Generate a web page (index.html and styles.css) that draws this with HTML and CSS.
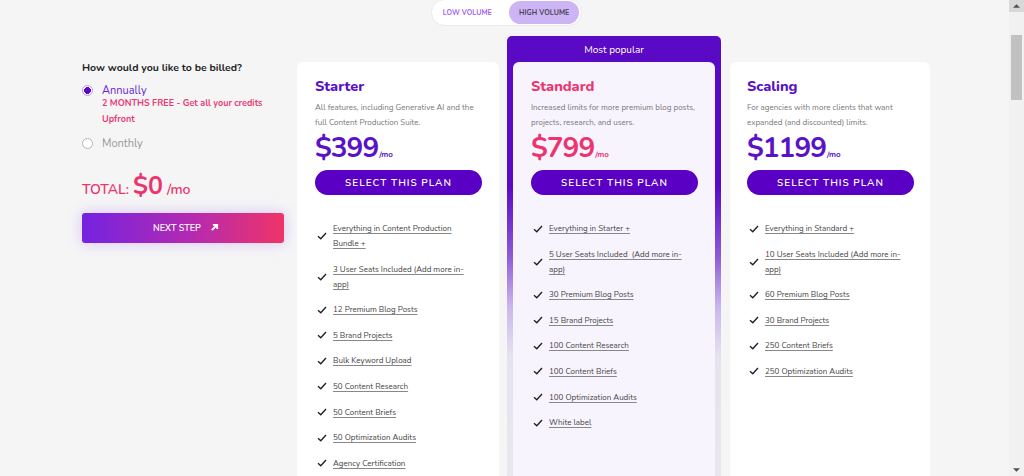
FILE: index.html
```html
<!DOCTYPE html>
<html lang="en">
<head>
<meta charset="utf-8">
<title>Pricing</title>
<link rel="stylesheet" href="styles.css">
</head>
<body>
<div class="page">
  <div class="toggle-row">
    <div class="toggle">
      <span class="tog-opt">LOW VOLUME</span>
      <span class="tog-opt active">HIGH VOLUME</span>
    </div>
  </div>
  <div class="pricing">
    <div class="billing">
      <div class="bill-q">How would you like to be billed?</div>
      <div class="radio-row">
        <span class="radio on"></span>
        <div>
          <div class="radio-label on">Annually</div>
          <div class="promo">2 MONTHS FREE - Get all your credits<br>Upfront</div>
        </div>
      </div>
      <div class="radio-row">
        <span class="radio"></span>
        <div class="radio-label">Monthly</div>
      </div>
      <div class="total"><span class="t-label">TOTAL:</span> <span class="t-amt">$0</span> <span class="t-mo">/mo</span></div>
      <button class="next">NEXT STEP
        <svg class="arrow" viewBox="0 0 10 10" width="9" height="9"><path d="M2 8 L7.5 2.5 M3.2 2 H8 V6.8" fill="none" stroke="#fff" stroke-width="2"/></svg>
      </button>
    </div>

    <div class="card">
      <div class="plan-name">Starter</div>
      <div class="plan-desc">All features, including Generative AI and the full Content Production Suite.</div>
      <div class="price"><span class="amt">$399</span><span class="mo">/mo</span></div>
      <button class="select">SELECT THIS PLAN</button>
      <ul class="features">
        <li><svg class="chk" viewBox="0 0 10 8"><path d="M1 4.2 L3.8 6.8 L9 1" fill="none" stroke="#222" stroke-width="1.4"/></svg><span>Everything in Content Production Bundle +</span></li>
        <li><svg class="chk" viewBox="0 0 10 8"><path d="M1 4.2 L3.8 6.8 L9 1" fill="none" stroke="#222" stroke-width="1.4"/></svg><span>3 User Seats Included (Add more in-app)</span></li>
        <li><svg class="chk" viewBox="0 0 10 8"><path d="M1 4.2 L3.8 6.8 L9 1" fill="none" stroke="#222" stroke-width="1.4"/></svg><span>12 Premium Blog Posts</span></li>
        <li><svg class="chk" viewBox="0 0 10 8"><path d="M1 4.2 L3.8 6.8 L9 1" fill="none" stroke="#222" stroke-width="1.4"/></svg><span>5 Brand Projects</span></li>
        <li><svg class="chk" viewBox="0 0 10 8"><path d="M1 4.2 L3.8 6.8 L9 1" fill="none" stroke="#222" stroke-width="1.4"/></svg><span>Bulk Keyword Upload</span></li>
        <li><svg class="chk" viewBox="0 0 10 8"><path d="M1 4.2 L3.8 6.8 L9 1" fill="none" stroke="#222" stroke-width="1.4"/></svg><span>50 Content Research</span></li>
        <li><svg class="chk" viewBox="0 0 10 8"><path d="M1 4.2 L3.8 6.8 L9 1" fill="none" stroke="#222" stroke-width="1.4"/></svg><span>50 Content Briefs</span></li>
        <li><svg class="chk" viewBox="0 0 10 8"><path d="M1 4.2 L3.8 6.8 L9 1" fill="none" stroke="#222" stroke-width="1.4"/></svg><span>50 Optimization Audits</span></li>
        <li><svg class="chk" viewBox="0 0 10 8"><path d="M1 4.2 L3.8 6.8 L9 1" fill="none" stroke="#222" stroke-width="1.4"/></svg><span>Agency Certification</span></li>
      </ul>
    </div>

    <div class="popular">
      <div class="pop-head">Most popular</div>
      <div class="card featured">
        <div class="plan-name pink">Standard</div>
        <div class="plan-desc">Increased limits for more premium blog posts, projects, research, and users.</div>
        <div class="price pink"><span class="amt">$799</span><span class="mo">/mo</span></div>
        <button class="select">SELECT THIS PLAN</button>
        <ul class="features">
          <li><svg class="chk" viewBox="0 0 10 8"><path d="M1 4.2 L3.8 6.8 L9 1" fill="none" stroke="#222" stroke-width="1.4"/></svg><span>Everything in Starter +</span></li>
          <li><svg class="chk" viewBox="0 0 10 8"><path d="M1 4.2 L3.8 6.8 L9 1" fill="none" stroke="#222" stroke-width="1.4"/></svg><span>5 User Seats Included&nbsp; (Add more in-app)</span></li>
          <li><svg class="chk" viewBox="0 0 10 8"><path d="M1 4.2 L3.8 6.8 L9 1" fill="none" stroke="#222" stroke-width="1.4"/></svg><span>30 Premium Blog Posts</span></li>
          <li><svg class="chk" viewBox="0 0 10 8"><path d="M1 4.2 L3.8 6.8 L9 1" fill="none" stroke="#222" stroke-width="1.4"/></svg><span>15 Brand Projects</span></li>
          <li><svg class="chk" viewBox="0 0 10 8"><path d="M1 4.2 L3.8 6.8 L9 1" fill="none" stroke="#222" stroke-width="1.4"/></svg><span>100 Content Research</span></li>
          <li><svg class="chk" viewBox="0 0 10 8"><path d="M1 4.2 L3.8 6.8 L9 1" fill="none" stroke="#222" stroke-width="1.4"/></svg><span>100 Content Briefs</span></li>
          <li><svg class="chk" viewBox="0 0 10 8"><path d="M1 4.2 L3.8 6.8 L9 1" fill="none" stroke="#222" stroke-width="1.4"/></svg><span>100 Optimization Audits</span></li>
          <li><svg class="chk" viewBox="0 0 10 8"><path d="M1 4.2 L3.8 6.8 L9 1" fill="none" stroke="#222" stroke-width="1.4"/></svg><span>White label</span></li>
        </ul>
      </div>
    </div>

    <div class="card scaling">
      <div class="plan-name">Scaling</div>
      <div class="plan-desc">For agencies with more clients that want expanded (and discounted) limits.</div>
      <div class="price"><span class="amt">$1199</span><span class="mo">/mo</span></div>
      <button class="select">SELECT THIS PLAN</button>
      <ul class="features">
        <li><svg class="chk" viewBox="0 0 10 8"><path d="M1 4.2 L3.8 6.8 L9 1" fill="none" stroke="#222" stroke-width="1.4"/></svg><span>Everything in Standard +</span></li>
        <li><svg class="chk" viewBox="0 0 10 8"><path d="M1 4.2 L3.8 6.8 L9 1" fill="none" stroke="#222" stroke-width="1.4"/></svg><span>10 User Seats Included (Add more in-app)</span></li>
        <li><svg class="chk" viewBox="0 0 10 8"><path d="M1 4.2 L3.8 6.8 L9 1" fill="none" stroke="#222" stroke-width="1.4"/></svg><span>60 Premium Blog Posts</span></li>
        <li><svg class="chk" viewBox="0 0 10 8"><path d="M1 4.2 L3.8 6.8 L9 1" fill="none" stroke="#222" stroke-width="1.4"/></svg><span>30 Brand Projects</span></li>
        <li><svg class="chk" viewBox="0 0 10 8"><path d="M1 4.2 L3.8 6.8 L9 1" fill="none" stroke="#222" stroke-width="1.4"/></svg><span>250 Content Briefs</span></li>
        <li><svg class="chk" viewBox="0 0 10 8"><path d="M1 4.2 L3.8 6.8 L9 1" fill="none" stroke="#222" stroke-width="1.4"/></svg><span>250 Optimization Audits</span></li>
      </ul>
    </div>
  </div>
</div>
<div class="scrollbar">
  <div class="sb-up"><svg viewBox="0 0 8 4" width="7" height="4"><path d="M0 4 L4 0 L8 4 Z" fill="#505050"/></svg></div>
  <div class="sb-track"><div class="sb-thumb"></div></div>
  <div class="sb-down"><svg viewBox="0 0 8 4" width="7" height="4"><path d="M0 0 L4 4 L8 0 Z" fill="#505050"/></svg></div>
</div>
</body>
</html>
```
FILE: styles.css
```css
* { box-sizing: border-box; }
html, body { margin: 0; padding: 0; }
body {
  width: 1024px;
  height: 476px;
  overflow: hidden;
  display: flex;
  background: #f5f5f6;
  font-family: "Nunito", "Lato", "Noto Sans", sans-serif;
  color: #333;
}
.page { flex: 1; min-width: 0; }

.toggle-row { display: flex; justify-content: center; padding-left: 4px; height: 36px; }
.toggle {
  display: flex;
  align-items: center;
  height: 27px;
  margin-top: -1px;
  padding: 0 2px 0 11px;
  background: #fff;
  border: 1px solid #ebe8f0;
  border-radius: 14px;
  gap: 17px;
}
.tog-opt {
  font-size: 7px;
  font-weight: 700;
  color: #a45ef0;
  letter-spacing: 0.1px;
}
.tog-opt.active {
  background: #cdb4f5;
  color: #4a4458;
  height: 23px;
  line-height: 23px;
  padding: 0 10px;
  border-radius: 12px;
}

.pricing {
  display: flex;
  align-items: flex-start;
  padding-left: 82px;
}

.billing { width: 202px; margin-top: 26px; margin-right: 13px; }
.bill-q { font-size: 10.5px; font-weight: 700; color: #222; line-height: 12px; }
.radio-row { display: flex; align-items: flex-start; gap: 9px; margin-top: 10px; }
.radio-row + .radio-row { margin-top: 9.5px; }
.radio {
  width: 11px; height: 11px; border-radius: 50%;
  border: 1px solid #b5b5b5; background: #fff; flex: none; margin-top: 1px;
}
.radio.on { border: 1.5px solid #b996f3; background: radial-gradient(circle, #5a0ac6 0 3.2px, #fff 3.6px); }
.radio-label { font-size: 11px; color: #999; line-height: 13px; }
.radio-label.on { color: #6a1fd6; }
.promo { font-size: 9px; font-weight: 700; color: #ec3a73; line-height: 16px; margin-top: -2px; }

.total { margin-top: 21px; color: #ec356f; display: flex; align-items: baseline; gap: 4px; line-height: 30px; }
.t-label { font-size: 14px; font-weight: 600; }
.t-amt { font-size: 25px; font-weight: 700; }
.t-mo { font-size: 14px; font-weight: 600; }

.next {
  margin-top: 8px;
  width: 202px; height: 30px;
  border: none; border-radius: 3px;
  background: linear-gradient(90deg, #7423e0 0%, #b52ab0 55%, #ef3467 100%);
  box-shadow: 0 0 14px rgba(160, 100, 240, 0.35);
  color: #fff; font-family: inherit; font-size: 9px; font-weight: 600;
  display: flex; align-items: center; justify-content: center; gap: 9px;
  padding: 0 0 0 6px;
}

.card {
  width: 202px;
  height: 480px;
  margin-top: 26px;
  background: #fff;
  border-radius: 6px;
  padding: 14px 17px 0 18px;
}
.card.scaling { width: 200px; padding-left: 17px; }
.popular {
  width: 214px;
  height: 460px;
  margin: 0 9px 0 8px;
  border-radius: 5px 5px 0 0;
  padding: 0 6px;
  background: linear-gradient(#5a09c5 0px, #5a09c5 150px, #8c5ad6 220px, #c9b6ec 270px, #e6e2ef 320px, #eae8ee 460px);
}
.pop-head { height: 26px; color: #fff; text-align: center; font-size: 10px; line-height: 28px; }
.card.featured { margin-top: 0; background: #f8f4fe; width: 202px; }

.plan-name { font-size: 14.5px; font-weight: 800; color: #5a12c6; line-height: 20px; }
.plan-name.pink, .price.pink { color: #ec356f; }
.plan-desc { font-size: 8px; color: #777; line-height: 15px; margin-top: 4px; }
.price { color: #5a12c6; display: flex; align-items: baseline; margin-top: 3px; }
.amt { font-size: 28px; font-weight: 700; line-height: 30px; letter-spacing: -1px; }
.mo { font-size: 8px; font-weight: 700; margin-left: 1px; }
.select {
  display: block;
  width: 167px; height: 25px; margin-top: 7px;
  border: none; border-radius: 13px;
  background: #5a00c4; color: #fff;
  font-family: inherit; font-size: 10px; font-weight: 600; letter-spacing: 1px;
}
.features { list-style: none; margin: 26px 0 0 0; padding: 0; }
.features li {
  display: flex; align-items: center;
  font-size: 8px; line-height: 15px; color: #444;
  margin-bottom: 10.6px;
  padding-left: 2px;
}
.features li span { text-decoration: underline; text-decoration-color: #888; text-underline-offset: 1.5px; width: 136px; }
.chk { width: 10px; height: 8px; flex: none; margin-right: 6px; }

.scrollbar {
  width: 15px; height: 476px; background: #f1f1f1;
  display: flex; flex-direction: column;
}
.sb-up, .sb-down { height: 12px; display: flex; align-items: center; justify-content: center; }
.sb-up { background: #d8d8d8; }
.sb-track { flex: 1; padding: 3px 2px 0 2px; }
.sb-thumb { height: 65px; margin-top: 20px; background: #c1c1c1; }
```
